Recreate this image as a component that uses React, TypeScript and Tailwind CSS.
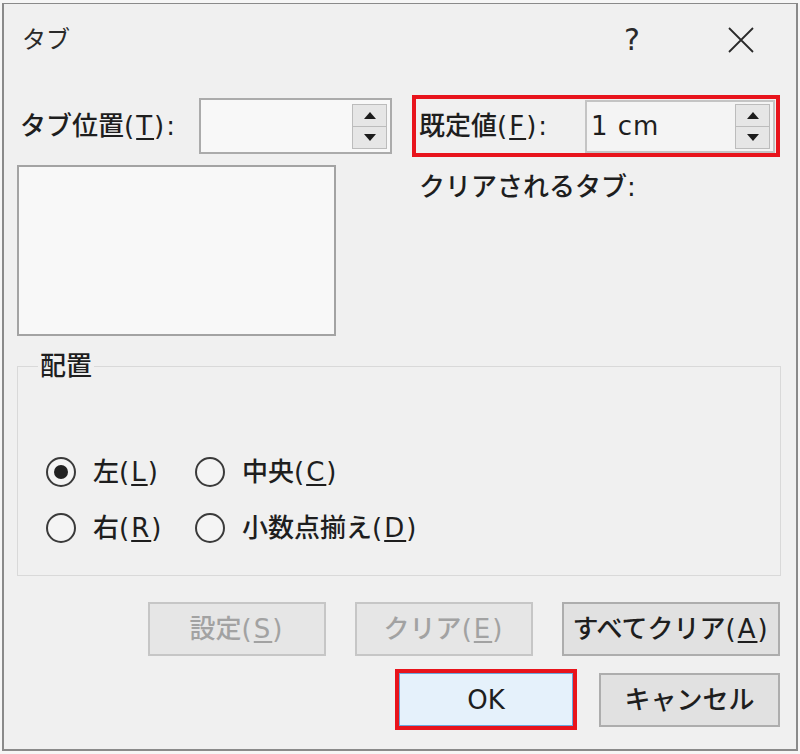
import React from "react";

const FONT = "font-['DejaVu_Sans','Noto_Sans_CJK_JP',sans-serif]";

function Spinner() {
  return (
    <div className="flex h-[45px] w-[35px] flex-col border border-[#bcbcbc] bg-[#e6e6e6]">
      <div className="flex flex-1 items-center justify-center border-b border-[#bcbcbc]">
        <svg width="12" height="7" viewBox="0 0 12 7">
          <path d="M6 0L12 7H0Z" fill="#1c1c1c" />
        </svg>
      </div>
      <div className="flex flex-1 items-center justify-center">
        <svg width="12" height="7" viewBox="0 0 12 7">
          <path d="M0 0H12L6 7Z" fill="#1c1c1c" />
        </svg>
      </div>
    </div>
  );
}

function Label({ text, k }: { text: string; k: string }) {
  return (
    <span className="whitespace-nowrap">
      {text}
      <span className="tracking-[2px]">
        (<span className="underline underline-offset-[3px]">{k}</span>)
      </span>
    </span>
  );
}

function Radio({ checked, text, k }: { checked?: boolean; text: string; k: string }) {
  return (
    <div className="flex h-[30px] items-center gap-[17px]">
      <span className="flex size-[30px] items-center justify-center rounded-full border-[2.5px] border-[#3a3a3a] bg-[#f4f4f4]">
        {checked && <span className="size-[14px] rounded-full bg-[#222]" />}
      </span>
      <Label text={text} k={k} />
    </div>
  );
}

function Btn({ text, k, disabled, w }: { text: string; k?: string; disabled?: boolean; w: string }) {
  return (
    <button
      className={`${w} flex h-[54px] items-center justify-center border-2 ${
        disabled ? "border-[#c6c6c6] bg-[#e6e6e6] text-[#a2a2a2]" : "border-[#adadad] bg-[#e1e1e1] text-[#1e1e1e]"
      }`}
    >
      {k ? <Label text={text} k={k} /> : text}
    </button>
  );
}

export default function App() {
  return (
    <div className={`h-[754px] w-[800px] bg-[#f6f6f6] px-[2px] py-[3px] text-[26px] font-medium leading-none text-[#1e1e1e] ${FONT}`}>
      <div className="h-full border-2 border-t border-[#8a8a8a] bg-[#f0f0f0]">
        {/* タイトルバー */}
        <div className="flex h-[72px] items-center pl-[18px] pr-[42px]">
          <span className="text-[24px] font-normal text-[#2a2a2a]">タブ</span>
          <span className="ml-auto text-[30px] font-normal text-[#2a2a2a]">?</span>
          <svg className="ml-[88px]" width="26" height="26" viewBox="0 0 26 26">
            <path d="M1 1L25 25M25 1L1 25" stroke="#2a2a2a" strokeWidth="1.8" />
          </svg>
        </div>

        <div className="pl-[13px] pr-[16px] pt-[19px]">
          <div className="flex items-start">
            {/* 左側 */}
            <div className="w-[378px] pt-[3px]">
              <div className="flex h-[56px] items-center">
                <span className="w-[182px] pl-[3px]">
                  タブ位置<span className="tracking-[2px]">(<span className="underline underline-offset-[3px]">T</span>):</span>
                </span>
                <div className="flex h-[56px] w-[193px] items-center justify-end border-2 border-[#ababab] bg-[#f8f8f8] pr-[3px]">
                  <Spinner />
                </div>
              </div>
              <div className="mt-[11px] h-[171px] w-[319px] border-2 border-[#a3a3a3] bg-[#f8f8f8]" />
            </div>

            {/* 右側 */}
            <div className="ml-[20px]">
              <div className="flex h-[62px] w-[368px] items-center border-4 border-[#e8141c]">
                <span className="w-[169px] pl-[3px]">
                  既定値<span className="tracking-[2px]">(<span className="underline underline-offset-[3px]">F</span>):</span>
                </span>
                <div className="flex h-[53px] w-[190px] items-center justify-between border-2 border-[#c4c4c4] bg-[#f4f4f4] pl-[4px] pr-[3px]">
                  <span className="tracking-[1px]">1 cm</span>
                  <Spinner />
                </div>
              </div>
              <p className="mt-[17px] pl-[7px] leading-[26px]">クリアされるタブ:</p>
            </div>
          </div>

          {/* 配置 */}
          <div className="relative mt-[30px] h-[210px] w-[764px] border border-[#d9d9d9]">
            <span className="absolute left-[20px] top-[-15px] bg-[#f0f0f0] px-[2px] leading-[28px]">配置</span>
            <div className="grid grid-cols-[149px_auto] gap-y-[26px] pl-[28px] pt-[90px]">
              <Radio checked text="左" k="L" />
              <Radio text="中央" k="C" />
              <Radio text="右" k="R" />
              <Radio text="小数点揃え" k="D" />
            </div>
          </div>

          {/* ボタン */}
          <div className="mt-[26px] flex justify-end gap-[29px]">
            <Btn text="設定" k="S" disabled w="w-[178px]" />
            <Btn text="クリア" k="E" disabled w="w-[178px]" />
            <Btn text="すべてクリア" k="A" w="w-[218px]" />
          </div>
          <div className="mt-[13px] flex items-center justify-end gap-[22px]">
            <div className="h-[61px] w-[182px] border-4 border-[#e8141c]">
              <button className="flex h-full w-full items-center justify-center border border-[#6aa7dd] bg-[#e5f1fb]">
                OK
              </button>
            </div>
            <Btn text="キャンセル" w="w-[181px]" />
          </div>
        </div>
      </div>
    </div>
  );
}
